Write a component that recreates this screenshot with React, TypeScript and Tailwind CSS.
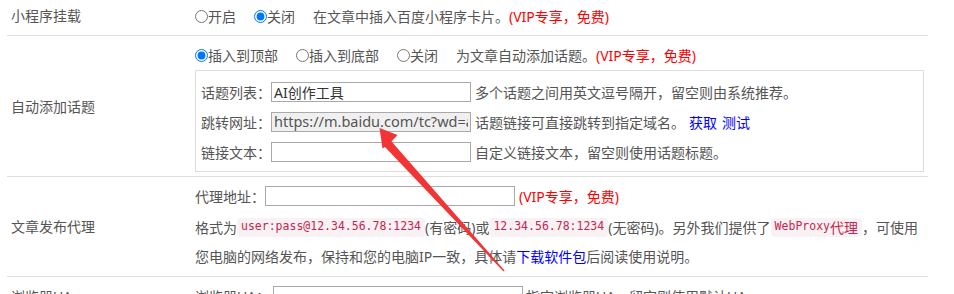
import React from "react";

type RadioProps = {
  name: string;
  label: string;
  checked?: boolean;
  first?: boolean;
};

function Radio({ name, label, checked, first }: RadioProps) {
  return (
    <label className={first ? "flex items-center" : "flex items-center ml-[18px]"}>
      <input
        type="radio"
        name={name}
        defaultChecked={checked}
        className="m-0 h-[13px] w-[13px]"
      />
      <span>{label}</span>
    </label>
  );
}

function Code({ children }: { children: React.ReactNode }) {
  return (
    <span className="flex items-center h-[19px] px-[4px] rounded-[4px] bg-[#f9f2f4] text-[#c7254e] font-['DejaVu_Sans_Mono',monospace] text-[11.5px]">
      {children}
    </span>
  );
}

const inputCls =
  "h-[20px] border border-[#a9a9a9] px-[2px] text-[14px] text-[#333] outline-none bg-white";

export default function App() {
  return (
    <div className="relative w-[954px] h-[294px] overflow-hidden bg-white text-[14px] text-[#555] font-['Noto_Sans','Noto_Sans_CJK_SC',sans-serif]">
      <div className="ml-[7px] w-[921px]">
        {/* 小程序挂载 */}
        <div className="flex h-[36px] border-b border-[#ddd]">
          <div className="w-[188px] pl-[4px] pt-[6px] leading-[20px]">小程序挂载</div>
          <div className="flex-1 pt-[6px]">
            <div className="flex items-center h-[20px]">
              <Radio name="mini" label="开启" first />
              <Radio name="mini" label="关闭" checked />
              <span className="ml-[18px]">在文章中插入百度小程序卡片。</span>
              <span className="text-[#f00]">(VIP专享，免费)</span>
            </div>
          </div>
        </div>

        {/* 自动添加话题 */}
        <div className="flex h-[141px] border-b border-[#ddd]">
          <div className="w-[188px] pl-[4px] flex items-center">自动添加话题</div>
          <div className="flex-1 pt-[9px]">
            <div className="flex items-center h-[20px]">
              <Radio name="topic" label="插入到顶部" checked first />
              <Radio name="topic" label="插入到底部" />
              <Radio name="topic" label="关闭" />
              <span className="ml-[18px]">为文章自动添加话题。</span>
              <span className="text-[#f00]">(VIP专享，免费)</span>
            </div>
            <div className="mt-[5px] w-[729px] h-[102px] border border-[#ddd] pl-[5px] pt-[11px] flex flex-col gap-[10px]">
              <div className="flex items-center h-[20px]">
                <span>话题列表：</span>
                <input className={inputCls + " w-[200px]"} defaultValue="AI创作工具" />
                <span className="ml-[4px]">多个话题之间用英文逗号隔开，留空则由系统推荐。</span>
              </div>
              <div className="flex items-center h-[20px]">
                <span>跳转网址：</span>
                <input
                  className="h-[20px] w-[200px] border border-[#a9a9a9] px-[2px] text-[14.5px] text-[#555] outline-none bg-[#f0f0f0]"
                  readOnly
                  value="https://m.baidu.com/tc?wd=abc"
                />
                <span className="ml-[4px]">话题链接可直接跳转到指定域名。</span>
                <a className="ml-[4px] text-[#00f]" href="#">获取</a>
                <a className="ml-[5px] text-[#00f]" href="#">测试</a>
              </div>
              <div className="flex items-center h-[20px]">
                <span>链接文本：</span>
                <input className={inputCls + " w-[200px]"} />
                <span className="ml-[4px]">自定义链接文本，留空则使用话题标题。</span>
              </div>
            </div>
          </div>
        </div>

        {/* 文章发布代理 */}
        <div className="flex h-[100px] border-b border-[#ddd]">
          <div className="w-[188px] pl-[4px] flex items-center">文章发布代理</div>
          <div className="flex-1 pt-[9px]">
            <div className="flex items-center h-[20px]">
              <span>代理地址：</span>
              <input className={inputCls + " w-[250px]"} />
              <span className="ml-[4px] text-[#f00]">(VIP专享，免费)</span>
            </div>
            <div className="mt-[6px] flex items-center h-[30px] whitespace-nowrap">
              <span>格式为</span>
              <Code>user:pass@12.34.56.78:1234</Code>
              <span>(有密码)或</span>
              <Code>12.34.56.78:1234</Code>
              <span>(无密码)。另外我们提供了</span>
              <Code>
                WebProxy<span className="font-['Noto_Sans_CJK_SC',sans-serif] text-[14px]">代理</span>
              </Code>
              <span>，可使用</span>
            </div>
            <div className="h-[30px] leading-[30px] whitespace-nowrap">
              您电脑的网络发布，保持和您的电脑IP一致，具体请
              <a className="text-[#00f]" href="#">下载软件包</a>
              后阅读使用说明。
            </div>
          </div>
        </div>

        {/* 浏览器UA */}
        <div className="flex h-[40px] border-b border-[#ddd]">
          <div className="w-[188px] pl-[4px] flex items-center">浏览器UA</div>
          <div className="flex-1 pt-[9px]">
            <div className="flex items-center h-[20px]">
              <span>浏览器UA：</span>
              <input className={inputCls + " ml-[3px] w-[250px]"} />
              <span className="ml-[3px]">指定浏览器UA，留空则使用默认UA</span>
            </div>
          </div>
        </div>
      </div>

      {/* annotation arrow */}
      <svg
        className="absolute left-0 top-0 pointer-events-none"
        width="954"
        height="294"
        viewBox="0 0 954 294"
      >
        <polygon
          points="379.5,128 397.5,135 391.5,141.5 504.5,270.5 503.5,271.5 385,147 382.5,148.5"
          fill="#f23434"
        />
      </svg>
    </div>
  );
}
